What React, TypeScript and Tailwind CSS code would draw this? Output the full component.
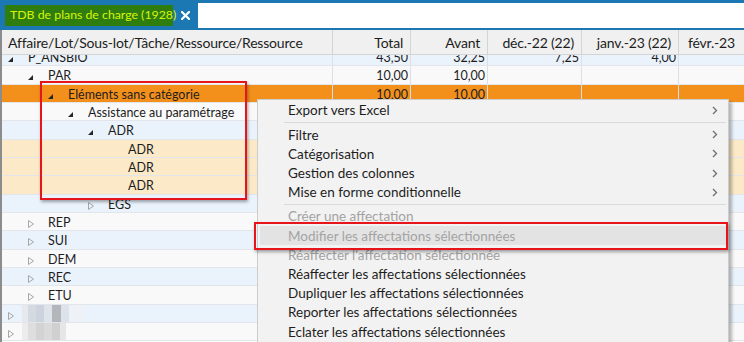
import React from "react";

type Row = {
  label: string;
  level: number;
  kind: "open" | "closed" | "leaf";
  bg: string;
  vals?: string[];
  blur?: number;
};

const BLUE = "bg-[#eaf3fc]";
const WHITE = "bg-[#f9f9fa]";
const ORANGE = "bg-[#f3901c]";
const CREAM = "bg-[#fbe9c7]";

const rows: Row[] = [
  { label: "P_ANSBIO", level: 0, kind: "open", bg: BLUE, vals: ["43,50", "32,25", "7,25", "4,00", ""] },
  { label: "PAR", level: 1, kind: "open", bg: WHITE, vals: ["10,00", "10,00", "", "", ""] },
  { label: "Eléments sans catégorie", level: 2, kind: "open", bg: ORANGE, vals: ["10,00", "10,00", "", "", ""] },
  { label: "Assistance au paramétrage", level: 3, kind: "open", bg: WHITE, vals: ["10,00", "10,00", "", "", ""] },
  { label: "ADR", level: 4, kind: "open", bg: BLUE },
  { label: "ADR", level: 5, kind: "leaf", bg: CREAM },
  { label: "ADR", level: 5, kind: "leaf", bg: CREAM },
  { label: "ADR", level: 5, kind: "leaf", bg: CREAM },
  { label: "EGS", level: 4, kind: "closed", bg: BLUE },
  { label: "REP", level: 1, kind: "closed", bg: WHITE },
  { label: "SUI", level: 1, kind: "closed", bg: BLUE },
  { label: "DEM", level: 1, kind: "closed", bg: WHITE },
  { label: "REC", level: 1, kind: "closed", bg: BLUE },
  { label: "ETU", level: 1, kind: "closed", bg: WHITE },
  { label: "", level: 0, kind: "closed", bg: BLUE, blur: 1 },
  { label: "", level: 0, kind: "closed", bg: WHITE, blur: 2 },
];

const colW = ["w-[331px]", "w-[78px]", "w-[77px]", "w-[94px]", "w-[97px]", "w-[80px]"];

function OpenArrow() {
  return (
    <svg width="5" height="5" viewBox="0 0 5 5" className="mt-[9px]">
      <polygon points="5,0 5,5 0,5" fill="#262626" />
    </svg>
  );
}

function ClosedArrow() {
  return (
    <svg width="6" height="8" viewBox="0 0 6 8" className="mt-[7px]">
      <polygon points="0.5,0.5 5.5,4 0.5,7.5" fill="none" stroke="#a6a6a6" strokeWidth="1" />
    </svg>
  );
}

function Chevron() {
  return (
    <svg width="6" height="9" viewBox="0 0 6 9" className="shrink-0">
      <polyline points="1,1 4.5,4.5 1,8" fill="none" stroke="#6e6e6e" strokeWidth="1.3" />
    </svg>
  );
}

function BlurBlob({ variant }: { variant: number }) {
  if (variant === 1) {
    return (
      <div className="flex h-full items-stretch">
        <div className="w-[6px] bg-[#e6eaef]" />
        <div className="w-[8px] bg-[#d5dae2]" />
        <div className="w-[8px] bg-[#cdd3dc]" />
        <div className="w-[8px] bg-[#dfe4ea]" />
        <div className="w-[9px] bg-[#b3b7bc]" />
        <div className="w-[8px] bg-[#dde3ea]" />
        <div className="w-[14px] bg-[#eef2f7]" />
      </div>
    );
  }
  return (
    <div className="flex h-full items-stretch">
      <div className="w-[6px] bg-[#ececec]" />
      <div className="w-[8px] bg-[#dedede]" />
      <div className="w-[8px] bg-[#d3d3d3]" />
      <div className="w-[8px] bg-[#dadada]" />
      <div className="w-[8px] bg-[#d0d0d0]" />
      <div className="w-[6px] bg-[#e6e6e6]" />
    </div>
  );
}

function TreeCell({ row }: { row: Row }) {
  const arrowLeft = 8 + row.level * 20;
  return (
    <div className={`${colW[0]} relative h-full shrink-0 border-r border-[#dcdfe3]`}>
      {row.blur ? (
        <div className="flex h-full items-start">
          <div className="ml-[6px] w-[8px]">
            <ClosedArrow />
          </div>
          <div className="ml-[6px] h-full">
            <BlurBlob variant={row.blur} />
          </div>
        </div>
      ) : (
        <div className="flex h-full items-start" style={{ paddingLeft: arrowLeft - 2 }}>
          <div className="w-[20px] shrink-0">
            {row.kind === "open" && <OpenArrow />}
            {row.kind === "closed" && <ClosedArrow />}
          </div>
          <span className="leading-[19px] whitespace-nowrap">{row.label}</span>
        </div>
      )}
    </div>
  );
}

function BodyRow({ row }: { row: Row }) {
  const vals = row.vals ?? ["", "", "", "", ""];
  return (
    <div className={`flex h-[18.33px] ${row.bg} border-b border-[#e2e5e9] text-[#1d1d1d]`}>
      <TreeCell row={row} />
      {vals.map((v, i) => (
        <div
          key={i}
          className={`${colW[i + 1]} h-full shrink-0 border-r border-[#dcdfe3] pr-[2px] text-right leading-[19px]`}
        >
          {v}
        </div>
      ))}
    </div>
  );
}

type MenuItem =
  | { sep: true }
  | { label: string; sub?: boolean; disabled?: boolean; hover?: boolean; sep?: false };

const menu: MenuItem[] = [
  { label: "Export vers Excel", sub: true },
  { sep: true },
  { label: "Filtre", sub: true },
  { label: "Catégorisation", sub: true },
  { label: "Gestion des colonnes", sub: true },
  { label: "Mise en forme conditionnelle", sub: true },
  { sep: true },
  { label: "Créer une affectation", disabled: true },
  { label: "Modifier les affectations sélectionnées", disabled: true, hover: true },
  { label: "Réaffecter l'affectation sélectionnée", disabled: true },
  { label: "Réaffecter les affectations sélectionnées" },
  { label: "Dupliquer les affectations sélectionnées" },
  { label: "Reporter les affectations sélectionnées" },
  { label: "Eclater les affectations sélectionnées" },
];

function ContextMenu() {
  return (
    <div className="absolute left-[257px] top-[99px] w-[472px] border border-[#cccccc] bg-[#f2f2f2] px-[2px] pb-[10px] pt-[1px] text-[13.5px] shadow-[3px_3px_3px_rgba(0,0,0,0.28)]">
      {menu.map((m, i) =>
        m.sep ? (
          <div key={i} className="flex h-[5px] items-center pl-[24px]">
            <div className="h-[1px] w-full bg-[#dadada]" />
          </div>
        ) : (
          <div
            key={i}
            className={`flex h-[19.2px] items-center pl-[28px] pr-[8px] ${m.hover ? "bg-[#e3e3e3]" : ""} ${
              m.disabled ? "text-[#a3a3a3]" : "text-[#1d1d1d]"
            }`}
          >
            <span className="flex-1 whitespace-nowrap">{m.label}</span>
            {m.sub && <Chevron />}
          </div>
        )
      )}
    </div>
  );
}

export default function App() {
  return (
    <div
      className="relative h-[342px] w-[744px] overflow-hidden bg-white text-[12.5px]"
      style={{ fontFamily: "Lato, 'Open Sans', sans-serif" }}
    >
      {/* Tab bar */}
      <div className="flex h-[30px]">
        <div className="flex w-[198px] shrink-0 items-center bg-[#1b78b2] pl-[5px]">
          <div className="flex h-[21px] w-[168px] shrink-0 items-center whitespace-nowrap bg-[#2f7d0e] pl-[5px] text-[12.3px] text-[#d7f50a]">
            TDB de plans de charge (1928)
          </div>
          <svg width="9" height="9" viewBox="0 0 9 9" className="ml-[8px] shrink-0">
            <path d="M1 1 L8 8 M8 1 L1 8" stroke="#ffffff" strokeWidth="2.2" strokeLinecap="square" />
          </svg>
        </div>
        <div className="flex-1 border-b-[2px] border-t-[3px] border-[#1b78b2] bg-white" />
      </div>

      {/* Grid */}
      <div className="flex h-[312px] flex-col border-l-[2px] border-[#8c8c8c]">
        <div className="z-10 flex h-[25px] shrink-0 border-b border-[#d4d4d4] bg-[#f0f0f0] text-[14px] tracking-[-0.2px] text-[#1d1d1d]">
          <div className={`${colW[0]} flex shrink-0 items-center whitespace-nowrap border-r border-[#d4d4d4] pl-[6px]`}>
            Affaire/Lot/Sous-lot/Tâche/Ressource/Ressource
          </div>
          {["Total", "Avant", "déc.-22 (22)", "janv.-23 (22)", "févr.-23"].map((h, i) => (
            <div
              key={h}
              className={`${colW[i + 1]} flex shrink-0 items-center border-r border-[#d4d4d4] ${
                i === 4 ? "justify-start pl-[9px]" : "justify-end pr-[7px]"
              }`}
            >
              <span className="whitespace-nowrap">{h}</span>
            </div>
          ))}
        </div>
        <div className="relative flex-1 overflow-hidden">
          <div className="mt-[-7px]">
            {rows.map((r, i) => (
              <BodyRow key={i} row={r} />
            ))}
          </div>
        </div>
      </div>

      <ContextMenu />

      {/* Red highlight boxes */}
      <div className="absolute left-[40px] top-[81px] h-[119px] w-[207px] border-[2.5px] border-[#e8141b] shadow-[1px_2px_3px_rgba(0,0,0,0.35)]" />
      <div className="absolute left-[254px] top-[222px] h-[28px] w-[474px] border-[2.5px] border-[#e8141b] shadow-[1px_2px_3px_rgba(0,0,0,0.35)]" />
    </div>
  );
}
